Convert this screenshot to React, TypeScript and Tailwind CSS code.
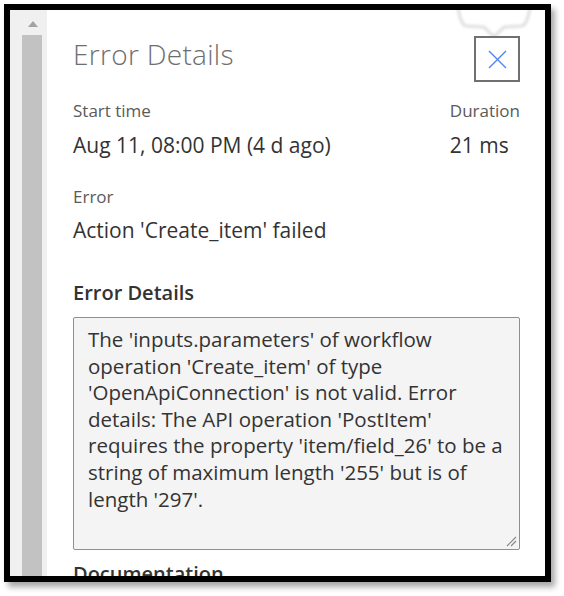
import React from "react";

const lines = [
  "The 'inputs.parameters' of workflow",
  "operation 'Create_item' of type",
  "'OpenApiConnection' is not valid. Error",
  "details: The API operation 'PostItem'",
  "requires the property 'item/field_26' to be a",
  "string of maximum length '255' but is of",
  "length '297'.",
];

export default function App() {
  return (
    <div
      className="w-[564px] h-[596px] bg-white overflow-hidden pt-[4px] pl-[4px]"
      style={{ fontFamily: '"Segoe UI", "Open Sans", sans-serif' }}
    >
      <div className="w-[547px] h-[578px] border-[6px] border-black shadow-[4px_5px_6px_rgba(0,0,0,0.35)] flex overflow-hidden bg-white">
        {/* scrollbar */}
        <div className="w-[37px] h-full bg-[#f0f0f0] flex flex-col items-start shrink-0">
          <div className="h-[25px] w-full flex items-center justify-start pl-[18px] pt-[2px]">
            <svg width="10" height="6" viewBox="0 0 10 6">
              <path d="M0 6 L5 0 L10 6 Z" fill="#a3a3a3" />
            </svg>
          </div>
          <div className="ml-[12px] w-[20px] flex-1 bg-[#c2c2c2]" />
        </div>
        {/* content */}
        <div className="relative flex-1 pl-[26px] pr-[25px] pt-[26px]">
          <svg
            className="absolute left-[405px] top-[-4px]"
            width="84"
            height="36"
            viewBox="0 0 84 36"
          >
            <defs>
              <filter id="blur" x="-20%" y="-20%" width="140%" height="140%">
                <feGaussianBlur stdDeviation="1.4" />
              </filter>
            </defs>
            <path
              d="M6 0 Q8 18 14 20 L32 21 L42 31 L52 21 L70 20 Q76 18 78 0"
              fill="none"
              stroke="#d9d9d9"
              strokeWidth="2.5"
              filter="url(#blur)"
            />
          </svg>
          <div className="flex items-start justify-between">
            <div className="text-[28px] leading-[36px] font-light tracking-[0.3px] text-[#6e6e6e]">
              Error Details
            </div>
            <div className="relative w-[46px] h-[46px] border-2 border-[#707070] flex items-center justify-center bg-white">
              <svg width="19" height="19" viewBox="0 0 19 19">
                <path
                  d="M1 1 L18 18 M18 1 L1 18"
                  stroke="#5283f4"
                  strokeWidth="1.4"
                  fill="none"
                />
              </svg>
            </div>
          </div>
          <div className="mt-[19px] flex justify-between">
            <div>
              <div className="text-[17px] leading-[20px] text-[#5a5a5a]">Start time</div>
              <div className="mt-[10px] text-[21px] leading-[28px] text-[#333333]">
                Aug 11, 08:00 PM (4 d ago)
              </div>
            </div>
            <div>
              <div className="text-[17px] leading-[20px] text-[#5a5a5a]">Duration</div>
              <div className="mt-[10px] text-[21px] leading-[28px] text-[#333333]">21 ms</div>
            </div>
          </div>
          <div className="mt-[28px] text-[17px] leading-[20px] text-[#5a5a5a]">Error</div>
          <div className="mt-[9px] text-[21px] leading-[28px] text-[#333333]">
            Action 'Create_item' failed
          </div>
          <div className="mt-[37px] text-[20px] leading-[24px] font-semibold text-[#333333]">
            Error Details
          </div>
          <div className="relative mt-[12px] h-[233px] border border-[#8f8f8f] rounded-[2px] bg-[#f4f4f4] pl-[14px] pt-[8px] text-[20.5px] leading-[26.6px] text-[#333333]">
            {lines.map((l) => (
              <div key={l} className="whitespace-nowrap">
                {l}
              </div>
            ))}
            <svg
              className="absolute right-[2px] bottom-[2px]"
              width="12"
              height="12"
              viewBox="0 0 12 12"
            >
              <path d="M11 2 L2 11 M11 6 L6 11" stroke="#8a8a8a" strokeWidth="1.2" />
            </svg>
          </div>
          <div className="mt-[12px] text-[20px] leading-[24px] font-semibold text-[#333333]">
            Documentation
          </div>
        </div>
      </div>
    </div>
  );
}
